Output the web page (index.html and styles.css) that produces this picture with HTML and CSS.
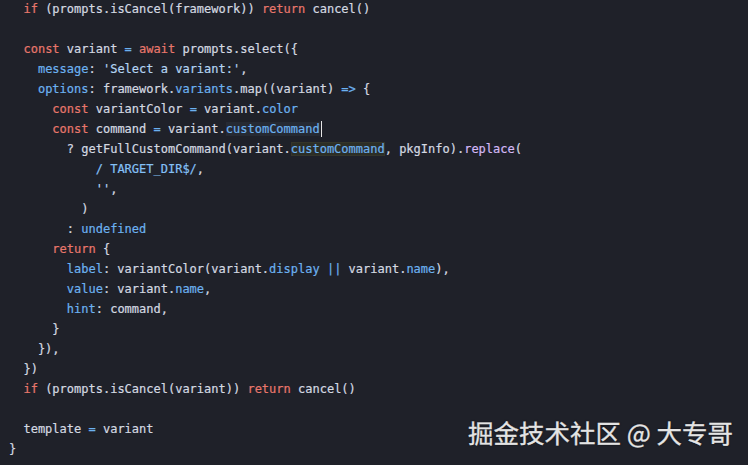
FILE: index.html
```html
<!DOCTYPE html>
<html>
<head>
<meta charset="utf-8">
<link rel="stylesheet" href="styles.css">
</head>
<body>
<div class="editor">
<div class="code">
<div class="ln">  <span class="kw">if</span> (prompts.isCancel(framework)) <span class="kw">return</span> cancel()</div>
<div class="ln"> </div>
<div class="ln">  <span class="kw">const</span> variant <span class="op">=</span> <span class="kw">await</span> prompts.select({</div>
<div class="ln">    <span class="pr">message</span>: <span class="str">'Select a variant:'</span>,</div>
<div class="ln">    <span class="pr">options</span>: framework.<span class="pr">variants</span>.map((variant) <span class="op">=&gt;</span> {</div>
<div class="ln">      <span class="kw">const</span> variantColor <span class="op">=</span> variant.<span class="pr">color</span></div>
<div class="ln">      <span class="kw">const</span> command <span class="op">=</span> variant.<span class="pr sel">customCommand</span><span class="caret"></span></div>
<div class="ln">        ? getFullCustomCommand(variant.<span class="pr hl">customCommand</span>, pkgInfo).<span class="fn">replace</span>(</div>
<div class="ln">            <span class="re">/ TARGET_DIR$/</span>,</div>
<div class="ln">            <span class="str">''</span>,</div>
<div class="ln">          )</div>
<div class="ln">        : <span class="pr">undefined</span></div>
<div class="ln">      <span class="kw">return</span> {</div>
<div class="ln">        <span class="pr">label</span>: variantColor(variant.<span class="pr">display</span> <span class="op">||</span> variant.<span class="pr">name</span>),</div>
<div class="ln">        <span class="pr">value</span>: variant.<span class="pr">name</span>,</div>
<div class="ln">        <span class="pr">hint</span>: command,</div>
<div class="ln">      }</div>
<div class="ln">    }),</div>
<div class="ln">  })</div>
<div class="ln">  <span class="kw">if</span> (prompts.isCancel(variant)) <span class="kw">return</span> cancel()</div>
<div class="ln"> </div>
<div class="ln">  template <span class="op">=</span> variant</div>
<div class="ln">}</div>
</div>
<div class="watermark">掘金技术社区 @ 大专哥</div>
</div>
</body>
</html>
```
FILE: styles.css
```css
html, body {
  margin: 0;
  padding: 0;
  background: #1f2129;
  width: 748px;
  height: 465px;
  overflow: hidden;
}
.editor {
  position: relative;
  width: 748px;
  height: 465px;
  background: #1f2129;
}
.code {
  margin: 0;
  padding: 0 0 0 9px;
  position: relative;
  top: -1px;
  font-family: "DejaVu Sans Mono", "Liberation Mono", monospace;
  font-size: 12px;
  line-height: 20px;
  color: #d4d9e1;
  -webkit-text-stroke: 0.2px currentColor;
}
.ln {
  white-space: pre;
  height: 20px;
}
.kw { color: #e8776c; }
.pr { color: #6cb1f0; }
.op { color: #6cb1f0; }
.str { color: #b3d4f2; }
.re { color: #84c0f6; }
.fn { color: #d3b8f5; }
.sel { background: #262a33; }
.hl { background: #2c2e26; box-shadow: inset 0 0 0 1px #34352b; }
.caret {
  display: inline-block;
  width: 1px;
  height: 16px;
  margin-left: 1px;
  vertical-align: -4px;
  background: #e6e6e6;
}
.watermark {
  position: absolute;
  right: 15px;
  top: 415px;
  font-family: "Noto Sans CJK SC", "Noto Sans", sans-serif;
  font-size: 25.5px;
  line-height: 34px;
  color: #e4e4e4;
  -webkit-text-stroke: 0.3px #e4e4e4;
  text-shadow: 0 0 2px rgba(0,0,0,0.6);
}
```
